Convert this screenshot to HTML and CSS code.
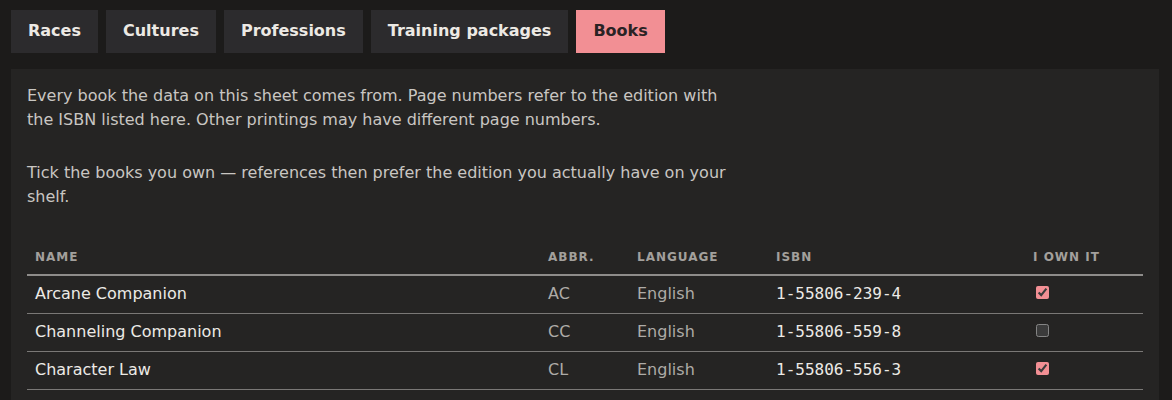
FILE: index.html
```html
<!DOCTYPE html>
<html lang="en">
<head>
    <meta charset="UTF-8">
    <meta name="viewport" content="width=device-width, initial-scale=1.0">
    <title>Books</title>
    <link rel="stylesheet" href="styles.css">
</head>
<body>
    <nav class="tabs">
        <a href="#" class="tab">Races</a>
        <a href="#" class="tab">Cultures</a>
        <a href="#" class="tab">Professions</a>
        <a href="#" class="tab">Training packages</a>
        <a href="#" class="tab active">Books</a>
    </nav>

    <section class="panel">
        <p class="intro">Every book the data on this sheet comes from. Page numbers refer to the edition with the ISBN listed here. Other printings may have different page numbers.</p>
        <p class="intro">Tick the books you own — references then prefer the edition you actually have on your shelf.</p>

        <table class="books">
            <thead>
                <tr>
                    <th class="col-name">Name</th>
                    <th class="col-abbr">Abbr.</th>
                    <th class="col-lang">Language</th>
                    <th class="col-isbn">ISBN</th>
                    <th class="col-own">I own it</th>
                </tr>
            </thead>
            <tbody>
                <tr>
                    <td class="name">Arcane Companion</td>
                    <td class="muted">AC</td>
                    <td class="muted">English</td>
                    <td class="isbn">1-55806-239-4</td>
                    <td><input type="checkbox" checked></td>
                </tr>
                <tr>
                    <td class="name">Channeling Companion</td>
                    <td class="muted">CC</td>
                    <td class="muted">English</td>
                    <td class="isbn">1-55806-559-8</td>
                    <td><input type="checkbox"></td>
                </tr>
                <tr>
                    <td class="name">Character Law</td>
                    <td class="muted">CL</td>
                    <td class="muted">English</td>
                    <td class="isbn">1-55806-556-3</td>
                    <td><input type="checkbox" checked></td>
                </tr>
            </tbody>
        </table>
    </section>
</body>
</html>
```

FILE: styles.css
```css
body {
    font-family: "DejaVu Sans", Verdana, sans-serif;
    margin: 0;
    padding: 10px 13px 0 11px;
    background-color: #1c1b1a;
    color: #c9c6c2;
    color-scheme: dark;
}

.tabs {
    display: flex;
    gap: 8px;
    margin-bottom: 16px;
}

.tab {
    padding: 11px 17px 13px;
    font-size: 16px;
    line-height: 19px;
    font-weight: bold;
    color: #ece9e4;
    background: #2c2b2d;
    text-decoration: none;
}

.tab.active {
    background: #f28f94;
    color: #2a2224;
}

.panel {
    background: #252423;
    padding: 15px 16px 40px;
}

.intro {
    max-width: 700px;
    margin: 0 0 29px;
    font-size: 16px;
    line-height: 24px;
}

.books {
    width: 100%;
    border-collapse: collapse;
    table-layout: fixed;
    font-size: 16px;
}

.books th {
    box-sizing: border-box;
    text-align: left;
    font-size: 12px;
    font-weight: bold;
    letter-spacing: 1px;
    text-transform: uppercase;
    color: #a3a09c;
    padding: 12px 8px 10px;
    line-height: 14px;
    border-bottom: 2px solid #8e8c8a;
}

.col-name { width: 513px; }
.col-abbr { width: 89px; }
.col-lang { width: 139px; }
.col-isbn { width: 257px; }
.col-own  { width: 118px; }

.books td {
    padding: 6px 8px 7px;
    line-height: 24px;
    border-bottom: 1px solid #7a7876;
}

.books .name {
    color: #eceae6;
}

.books .muted {
    color: #aeaba7;
}

.books .isbn {
    font-family: "DejaVu Sans Mono", monospace;
    color: #eceae6;
}

.books input[type="checkbox"] {
    accent-color: #f28f94;
    margin: 0 0 0 3px;
    width: 13px;
    height: 13px;
    vertical-align: baseline;
}
```
